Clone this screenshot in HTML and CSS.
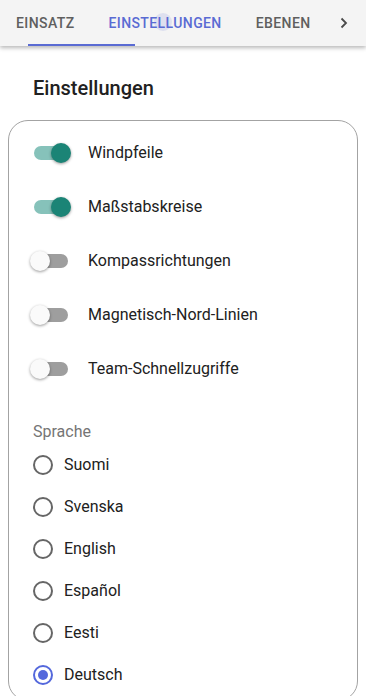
FILE: index.html
```html
<!DOCTYPE html>
<html lang="de">
<head>
<meta charset="utf-8">
<title>Einstellungen</title>
<link rel="stylesheet" href="styles.css">
</head>
<body>
<nav class="tabbar">
  <div class="tab">EINSATZ</div>
  <div class="tab active">EINSTELLUNGEN</div>
  <div class="tab">EBENEN</div>
  <div class="chev">
    <svg width="8" height="12" viewBox="0 0 8 12"><path d="M1.5 1.5 L6 6 L1.5 10.5" fill="none" stroke="#4a4a4a" stroke-width="1.8"/></svg>
  </div>
  <span class="ripple"></span>
  <span class="indicator"></span>
</nav>
<main class="content">
  <h1 class="title">Einstellungen</h1>
  <section class="card">
    <div class="row"><span class="switch on"><span class="track"></span><span class="thumb"></span></span><span class="label">Windpfeile</span></div>
    <div class="row"><span class="switch on"><span class="track"></span><span class="thumb"></span></span><span class="label">Maßstabskreise</span></div>
    <div class="row"><span class="switch"><span class="track"></span><span class="thumb"></span></span><span class="label">Kompassrichtungen</span></div>
    <div class="row"><span class="switch"><span class="track"></span><span class="thumb"></span></span><span class="label">Magnetisch-Nord-Linien</span></div>
    <div class="row"><span class="switch"><span class="track"></span><span class="thumb"></span></span><span class="label">Team-Schnellzugriffe</span></div>
    <div class="section-label">Sprache</div>
    <div class="radio-row"><span class="radio"></span><span class="label">Suomi</span></div>
    <div class="radio-row"><span class="radio"></span><span class="label">Svenska</span></div>
    <div class="radio-row"><span class="radio"></span><span class="label">English</span></div>
    <div class="radio-row"><span class="radio"></span><span class="label">Español</span></div>
    <div class="radio-row"><span class="radio"></span><span class="label">Eesti</span></div>
    <div class="radio-row"><span class="radio checked"></span><span class="label">Deutsch</span></div>
  </section>
</main>
</body>
</html>
```
FILE: styles.css
```css
* { box-sizing: border-box; }
html, body { margin: 0; padding: 0; background: #ffffff; }
body {
  font-family: Roboto, "Liberation Sans", sans-serif;
  color: #212121;
  width: 366px;
  height: 696px;
  overflow: hidden;
}
.tabbar {
  position: relative;
  display: flex;
  align-items: center;
  height: 46px;
  background: #f4f4f4;
  box-shadow: 0 2px 4px rgba(0,0,0,0.28);
  z-index: 2;
}
.tab {
  padding: 0 17px;
  font-size: 14px;
  font-weight: 500;
  letter-spacing: 0.4px;
  color: #5f5f5f;
  line-height: 46px;
}
.tab:first-child { padding-left: 16px; }
.tab.active { color: #5a6bd3; }
.chev {
  margin-left: auto;
  width: 42px;
  display: flex;
  justify-content: center;
  align-items: center;
  padding-right: 6px;
}
.chev svg { display: block; }
.ripple {
  position: absolute;
  left: 154px;
  top: 13px;
  width: 18px;
  height: 18px;
  border-radius: 50%;
  background: rgba(90,107,211,0.14);
}
.indicator {
  position: absolute;
  left: 28px;
  bottom: 0;
  width: 107px;
  height: 2px;
  background: #5a6bd3;
}
.content { padding-top: 30px; }
.title {
  margin: 0 0 20px 33px;
  font-size: 20px;
  font-weight: 500;
  line-height: 24px;
  color: #212121;
}
.card {
  margin: 0 8px;
  border: 1px solid #a3a3a3;
  border-radius: 20px;
  padding: 5px 0 4px 21px;
}
.row {
  display: flex;
  align-items: center;
  height: 54px;
}
.switch {
  position: relative;
  width: 42px;
  height: 20px;
  flex: none;
  margin-right: 16px;
}
.track {
  position: absolute;
  left: 4px;
  top: 3px;
  width: 34px;
  height: 14px;
  border-radius: 7px;
  background: #9e9e9e;
}
.thumb {
  position: absolute;
  left: 0;
  top: 0;
  width: 20px;
  height: 20px;
  border-radius: 50%;
  background: #fafafa;
  box-shadow: 0 1px 3px rgba(0,0,0,0.4);
}
.switch.on .track { background: #86c2ba; }
.switch.on .thumb { left: 21px; background: #1b8476; }
.label {
  font-size: 16px;
  line-height: 24px;
  color: #212121;
}
.section-label {
  margin: 24px 0 0 3px;
  font-size: 16px;
  line-height: 24px;
  color: #757575;
}
.radio-row {
  display: flex;
  align-items: center;
  height: 42px;
}
.radio {
  width: 20px;
  height: 20px;
  border: 2px solid #666666;
  border-radius: 50%;
  margin: 0 11px 0 3px;
  flex: none;
  display: flex;
  align-items: center;
  justify-content: center;
}
.radio.checked { border-color: #5468dc; }
.radio.checked::after {
  content: "";
  width: 10px;
  height: 10px;
  border-radius: 50%;
  background: #5468dc;
}
```
